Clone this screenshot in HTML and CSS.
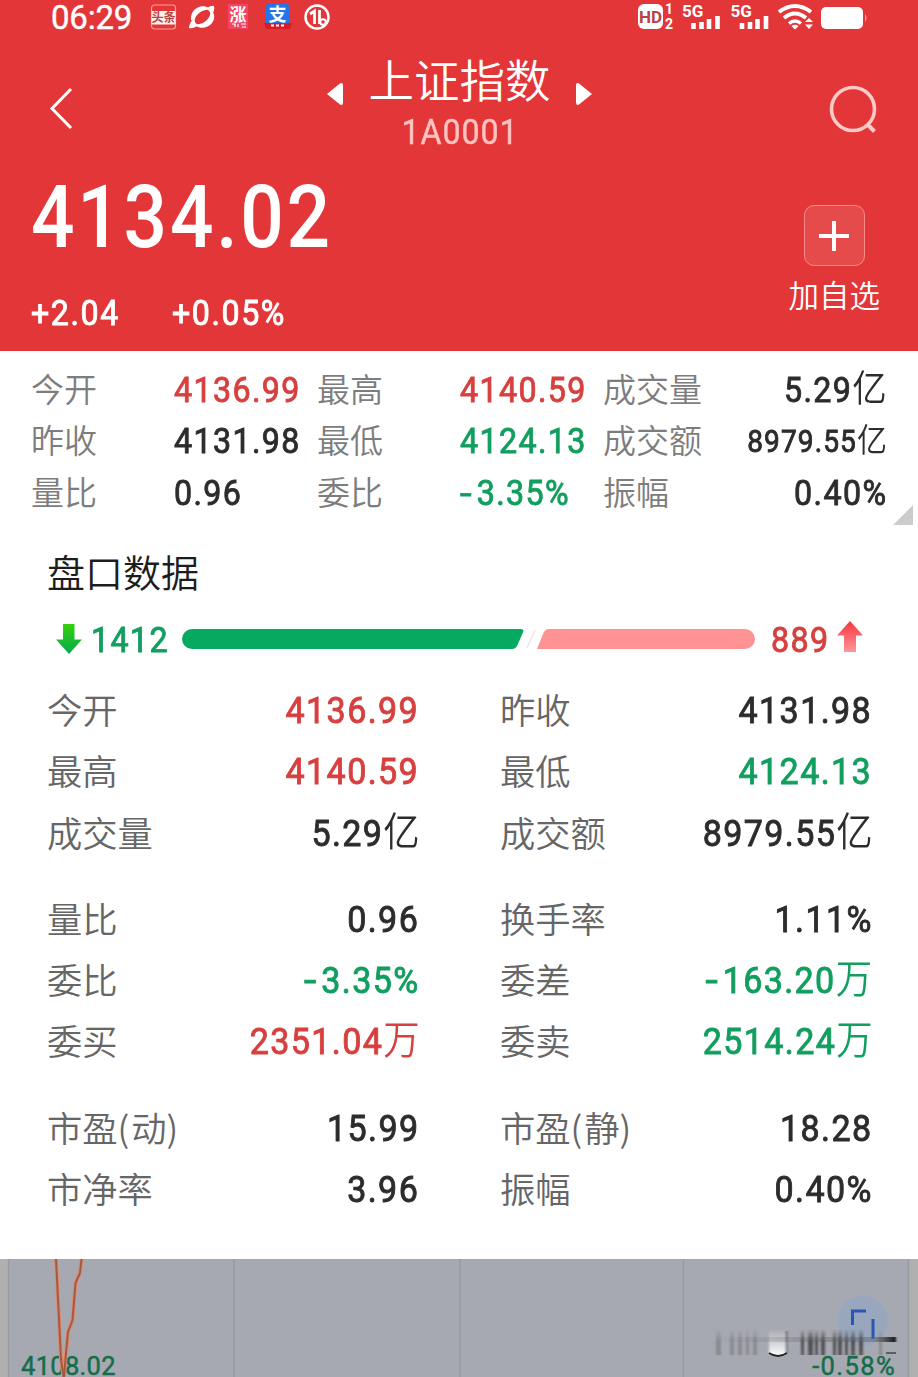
FILE: index.html
```html
<!DOCTYPE html>
<html lang="zh-CN">
<head>
<meta charset="utf-8">
<title>上证指数</title>
<link rel="stylesheet" href="styles.css">
</head>
<body>
<header class="header">
  <div class="status">
    <span class="clock">06:29</span>
    <svg class="status-apps" width="182" height="34" viewBox="0 0 182 34">
      <rect x="1.500" y="5" width="24" height="24" rx="3" fill="none" stroke="#ff9a95" stroke-width="1.200"/>
      <rect x="1.500" y="11" width="24" height="13.500" fill="#fff3f0"/>
      <text x="13.500" y="22" class="app-news" text-anchor="middle">头条</text>
      <ellipse cx="52.500" cy="17" rx="10.500" ry="6.500" transform="rotate(-40 52.500 17)" fill="none" stroke="#fff" stroke-width="2.400"/>
      <path d="M41 20C40 9 51 3 59 8C51 8 44 13 43 21zM64 14C66 25 54 31 46 26C54 26 61 20 63 13zM57 8q5-3 7-2 1 4-2 9zM43 19q-4 5-4 9 4 1 8-2z" fill="#fff"/>
      <rect x="78" y="4" width="20" height="25" fill="#f54463"/>
      <text x="88" y="21" class="app-rise" text-anchor="middle">涨</text>
      <path d="M82 24h3v3m3-3v3m3-3h5m-4 3h4" stroke="#fff" stroke-width="1.200" fill="none"/>
      <rect x="115" y="4" width="25" height="24" rx="4" fill="#2675e8"/>
      <text x="127.500" y="21" class="app-pay" text-anchor="middle">支</text>
      <path d="M114 23h28l-2 6h-24z" fill="#d61e28"/>
      <path d="M121 25.500h3m2 0h3m2 0h3" stroke="#fff" stroke-width="2"/>
      <circle cx="167" cy="17" r="11.500" fill="none" stroke="#fff" stroke-width="2.500"/>
      <path d="M160 14l4.500-3v13M169.500 10v14" fill="none" stroke="#fff" stroke-width="2.800"/>
      <circle cx="173" cy="22" r="2.800" fill="none" stroke="#fff" stroke-width="2"/>
    </svg>
    <svg class="status-system" width="232" height="34" viewBox="0 0 232 34">
      <rect x="1" y="4" width="25" height="25" rx="6" fill="#fff"/>
      <text x="13.500" y="23" class="hd" text-anchor="middle">HD</text>
      <text x="32" y="14" class="sim" text-anchor="middle">1</text>
      <text x="32" y="29" class="sim" text-anchor="middle">2</text>
      <g id="signal">
        <text x="45" y="16.500" class="net">5G</text>
        <path d="M56.500 29v-6M64.500 29v-7M72 29v-10M80.500 29v-13" stroke="#fff" stroke-width="4.600"/>
      </g>
      <use href="#signal" x="48.500"/>
      <g fill="none" stroke="#fff">
        <path d="M142 12Q158 0 174 12" stroke-width="4"/>
        <path d="M147 18Q158 9 169 18" stroke-width="4"/>
        <path d="M152 23.500Q158 18.500 164 23.500" stroke-width="3.500"/>
      </g>
      <path d="M154.500 26Q158 23.500 161.500 26L158 29.500zM168 22l4-4 4 4zM168 24.500h8l-4 4.500z" fill="#fff"/>
      <rect x="184" y="7" width="42" height="22" rx="5" fill="#fff"/>
      <path d="M228 14q3 4 0 8z" fill="#f4a3a3"/>
    </svg>
  </div>
  <nav class="nav">
    <svg class="back" width="30" height="46" viewBox="0 0 30 46"><path d="M25 4L6 23.500 25 43" fill="none" stroke="#fff" stroke-width="3"/></svg>
    <div class="titles">
      <div class="title-line">
        <svg width="18" height="24" viewBox="0 0 18 24"><path d="M1 12L14 1.500q3-1.500 3 2v17q0 3.500-3 2z" fill="#fff"/></svg>
        <h1>上证指数</h1>
        <svg width="18" height="24" viewBox="0 0 18 24"><path d="M17 12L4 1.500Q1 0 1 3.500v17Q1 24 4 22.500z" fill="#fff"/></svg>
      </div>
      <div class="code">1A0001</div>
    </div>
    <svg class="search" width="50" height="50" viewBox="0 0 50 50"><circle cx="25" cy="25" r="21.500" fill="none" stroke="#ffc9c8" stroke-width="3.600"/><path d="M39 40l7.500 7.500" stroke="#ffc9c8" stroke-width="4"/></svg>
  </nav>
  <div class="quote">
    <div>
      <div class="price">4134.02</div>
      <div class="change"><span>+2.04</span><span>+0.05%</span></div>
    </div>
    <div class="watch">
      <div class="plus"><svg width="32" height="32" viewBox="0 0 32 32"><path d="M16 1v30M1 16h30" stroke="#fff" stroke-width="4"/></svg></div>
      <span>加自选</span>
    </div>
  </div>
</header>
<section class="summary">
  <span class="label">今开</span><span class="num red">4136.99</span><span class="label">最高</span><span class="num red">4140.59</span><span class="label">成交量</span><span class="num end">5.29<i>亿</i></span>
  <span class="label">昨收</span><span class="num">4131.98</span><span class="label">最低</span><span class="num green">4124.13</span><span class="label">成交额</span><span class="num end compact">8979.55<i>亿</i></span>
  <span class="label">量比</span><span class="num">0.96</span><span class="label">委比</span><span class="num green"><span class="minus">-</span>3.35%</span><span class="label">振幅</span><span class="num end">0.40%</span>
  <svg class="corner" width="20" height="20" viewBox="0 0 20 20"><path d="M20 0v20H0z" fill="#ccc"/></svg>
</section>
<main class="sheet">
  <h2>盘口数据</h2>
  <div class="balance">
    <svg width="26" height="32" viewBox="0 0 26 32"><defs><linearGradient id="down" x2="0" y2="1"><stop stop-color="#35d20b"/><stop offset="1" stop-color="#04a950"/></linearGradient></defs><path d="M7 1h11.500v15.500H26L13 31 0 16.500h7z" fill="url(#down)"/></svg>
    <span class="fall"><span class="num green">1412</span></span>
    <svg class="ratio" width="574" height="20" viewBox="0 0 574 20">
      <path d="M10 0H338.500q4 0 2.500 3.500L335 17q-1.500 3-5 3H10A10 10 0 0 1 10 0z" fill="#05aa60"/>
      <path d="M353 1l-8 18" stroke="#ddd" stroke-width="1"/>
      <path d="M367 0H563a10 10 0 0 1 0 20H355L361 5q2-5 6-5z" fill="#ff9293"/>
    </svg>
    <span class="rise"><span class="num red">889</span></span>
    <svg class="up" width="26" height="31" viewBox="0 0 26 31"><defs><linearGradient id="up" x2="0" y2="1"><stop stop-color="#f5363e"/><stop offset="1" stop-color="#ff969b"/></linearGradient></defs><path d="M13 0L26 14.500h-7V31H7V14.500H0z" fill="url(#up)"/></svg>
  </div>
  <div class="group">
    <div class="item"><span class="label">今开</span><span class="num red">4136.99</span></div>
    <div class="item"><span class="label">昨收</span><span class="num">4131.98</span></div>
    <div class="item"><span class="label">最高</span><span class="num red">4140.59</span></div>
    <div class="item"><span class="label">最低</span><span class="num green">4124.13</span></div>
    <div class="item"><span class="label">成交量</span><span class="num">5.29<i>亿</i></span></div>
    <div class="item"><span class="label">成交额</span><span class="num">8979.55<i>亿</i></span></div>
  </div>
  <div class="group">
    <div class="item"><span class="label">量比</span><span class="num">0.96</span></div>
    <div class="item"><span class="label">换手率</span><span class="num">1.11%</span></div>
    <div class="item"><span class="label">委比</span><span class="num green"><span class="minus">-</span>3.35%</span></div>
    <div class="item"><span class="label">委差</span><span class="num green"><span class="minus">-</span>163.20<i>万</i></span></div>
    <div class="item"><span class="label">委买</span><span class="num red">2351.04<i>万</i></span></div>
    <div class="item"><span class="label">委卖</span><span class="num green">2514.24<i>万</i></span></div>
  </div>
  <div class="group">
    <div class="item"><span class="label">市盈<b>(</b>动<b>)</b></span><span class="num">15.99</span></div>
    <div class="item"><span class="label">市盈<b>(</b>静<b>)</b></span><span class="num">18.28</span></div>
    <div class="item"><span class="label">市净率</span><span class="num">3.96</span></div>
    <div class="item"><span class="label">振幅</span><span class="num">0.40%</span></div>
  </div>
</main>
<svg class="chart" width="918" height="118" viewBox="0 0 918 118">
  <defs>
    <linearGradient id="fadeDark" x2="0" y2="1"><stop stop-color="#222" stop-opacity="0"/><stop offset=".45" stop-color="#222" stop-opacity=".7"/><stop offset="1" stop-color="#222" stop-opacity=".6"/></linearGradient>
    <linearGradient id="fadeGray" x2="0" y2="1"><stop stop-color="#777" stop-opacity="0"/><stop offset=".5" stop-color="#777" stop-opacity=".6"/><stop offset="1" stop-color="#777" stop-opacity=".6"/></linearGradient>
    <linearGradient id="fadeWhite" x2="0" y2="1"><stop stop-color="#fff" stop-opacity="0"/><stop offset="1" stop-color="#fff"/></linearGradient>
    <linearGradient id="streak"><stop stop-color="#666" stop-opacity="0"/><stop offset=".6" stop-color="#666" stop-opacity=".4"/><stop offset=".88" stop-color="#666" stop-opacity=".5"/><stop offset="1" stop-color="#111"/></linearGradient>
    <filter id="soft" x="-5%" y="-20%" width="110%" height="140%"><feGaussianBlur stdDeviation=".9 .3"/></filter>
  </defs>
  <rect width="918" height="118" fill="#b0b0b0"/>
  <rect x="8" width="900" height="118" fill="#a7a9b2"/>
  <path d="M8.500 0v118M234 0v118M460 0v118M683.500 0v118M908.500 0v118" stroke="#989aa4" stroke-width="1.500"/>
  <text x="21" y="115.500" class="axis">4108.02</text>
  <path d="M56 0L58.500 50 61 100 63.500 118M81.500 0L80 14 75.500 24 72.500 61 68 73 66 94 64 118" fill="none" stroke="#e88768" stroke-width="3.800"/>
  <path d="M56 0L58.500 50 61 100 63.500 118M81.500 0L80 14 75.500 24 72.500 61 68 73 66 94 64 118" fill="none" stroke="#9e5c47" stroke-width="2"/>
  <circle cx="862.500" cy="62" r="25" fill="#98a7be"/>
  <path d="M852.500 66V52h13.500M873 60v20" fill="none" stroke="#2a55b5" stroke-width="3"/>
  <g filter="url(#soft)">
    <path d="M716 70h5v26h-5zM730 70h4v26h-4zM738 70h4v26h-4zM746 70h3v26h-3zM753 70h4v26h-4zM879 70h3v26h-3z" fill="url(#fadeGray)"/>
    <path d="M801 70h3v26h-3zM808 70h5v26h-5zM815 70h3v26h-3zM821 70h4v26h-4zM833 70h3v26h-3zM838 70h4v26h-4zM845 70h3v26h-3zM851 70h4v26h-4zM859 70h4v26h-4z" fill="url(#fadeDark)"/>
    <path d="M769 70h18v24q-9 7-18 0z" fill="url(#fadeWhite)"/>
    <path d="M786.500 72v22" stroke="#555" stroke-width="1.500"/>
    <rect x="714" y="78" width="182" height="5" fill="url(#streak)"/>
  </g>
  <path d="M769 94q9 6 18 0" fill="none" stroke="#222" stroke-width="1.800"/>
  <path d="M886 94h10" stroke="#444" stroke-width="1.500"/>
  <text x="896" y="115.500" class="axis wide" text-anchor="end">-0.58%</text>
</svg>
</body>
</html>
```
FILE: styles.css
```css
* { box-sizing: border-box; }
body {
  margin: 0;
  width: 918px;
  height: 1377px;
  overflow: hidden;
  background: #fff;
  color: #2c2c2c;
  font-family: Roboto, "Noto Sans CJK SC", sans-serif;
}
svg { display: block; flex: none; }
h1, h2 { margin: 0; font-weight: 350; }

.header { height: 351px; background: #e33638; color: #fff; }
.status { display: flex; height: 36px; padding-left: 51px; }
.clock { width: 99px; font-size: 33px; line-height: 35px; letter-spacing: -0.2px; -webkit-text-stroke: 0.4px; }
.status-system { margin-left: 305px; }
.app-news { font: 700 12px "Noto Sans CJK SC", sans-serif; fill: #b5433f; }
.app-rise { font: 700 17px "Noto Sans CJK SC", sans-serif; fill: #fff; }
.app-pay { font: 700 18px "Noto Sans CJK SC", sans-serif; fill: #fff; }
.hd { font: 700 17px Roboto, sans-serif; fill: #b64545; }
.sim { font: 700 14px Roboto, sans-serif; fill: #fff; }
.net { font: 700 17px Roboto, sans-serif; fill: #fff; }

.nav { display: flex; height: 124px; padding: 0 40px 0 46px; justify-content: space-between; }
.back { margin-top: 49px; }
.search { margin-top: 48px; }
.titles { width: 268px; margin-left: 15px; text-align: center; }
.title-line { display: flex; height: 76px; padding-top: 18px; align-items: center; justify-content: space-between; }
.title-line svg { margin-top: 22px; }
.title-line h1 { font-size: 45.5px; line-height: 66px; white-space: nowrap; }
.code { height: 40px; font-size: 35px; line-height: 41px; color: #ffc3c0; letter-spacing: 1px; transform: scaleX(0.92); -webkit-text-stroke: 0.4px; }

.quote { display: flex; justify-content: space-between; padding: 0 38px 0 31px; }
.price {
  width: 320px;
  height: 116px;
  padding-top: 7px;
  font-size: 88px;
  line-height: 100px;
  font-weight: 500;
  letter-spacing: 3.2px;
  transform: scaleX(0.87);
  transform-origin: left;
}
.change { display: flex; gap: 53px; font-size: 35px; line-height: 76px; -webkit-text-stroke: 0.9px; }
.change span { width: 88px; white-space: nowrap; letter-spacing: 1.7px; transform: scaleX(0.92); transform-origin: left; }
.watch { display: flex; flex-direction: column; align-items: center; padding-top: 45px; font-size: 30.5px; line-height: 62px; font-weight: 350; }
.plus { display: grid; width: 61px; height: 61px; place-items: center; border: 1.5px solid #f58c8c; border-radius: 10px; background: #e64b4b; }

.label { font-family: "Noto Sans CJK SC", sans-serif; font-weight: 350; white-space: nowrap; }
.label b { font-weight: 350; letter-spacing: 2px; }
.num {
  display: inline-block;
  font-weight: 400;
  white-space: nowrap;
  letter-spacing: 1.5px;
  transform: scaleX(0.92);
  transform-origin: left;
  -webkit-text-stroke: 0.9px;
}
.num i { font-size: 1.07em; line-height: 1; font-style: normal; font-weight: 350; letter-spacing: 0; -webkit-text-stroke: 0; }
.minus { display: inline-block; margin-right: 7px; transform: scaleX(1.3); transform-origin: left; }
.red { color: #d6403f; }
.green { color: #129e5f; }
.end { justify-self: end; transform-origin: right; }

.summary {
  position: relative;
  display: grid;
  grid-template-columns: repeat(5, 143px) minmax(0, 1fr);
  grid-auto-rows: 51.3px;
  height: 181px;
  padding: 13px 31px 0;
  font-size: 35px;
  line-height: 53px;
}
.summary .label { font-size: 33px; line-height: 49px; color: #7d7d7d; }
.summary .compact { font-size: 30.5px; letter-spacing: 1.2px; }
.corner { position: absolute; right: 5px; top: 154px; }

.sheet { height: 727px; padding: 0 46px 0 47px; font-size: 37px; line-height: 61.3px; }
.sheet h2 { height: 78px; font-size: 38px; line-height: 84px; color: #1d1d1d; }
.balance { display: flex; height: 58px; padding-left: 9px; align-items: center; font-size: 35px; }
.fall { width: 100px; padding: 3px 0 0 9px; }
.ratio { margin-top: -1px; }
.rise { width: 81px; padding: 3px 0 0 15px; }
.up { margin-top: -5px; }
.group { display: grid; grid-template-columns: 371px 371px; grid-auto-rows: 61.3px; column-gap: 82px; margin-bottom: 25px; }
.balance + .group { padding-top: 12px; }
.item { display: flex; justify-content: space-between; }
.item .label { font-size: 35.3px; line-height: 58px; color: #666; }
.item .num { margin-right: -1.5px; transform-origin: right; }
.chart { height: 118px; }
.axis { font: 400 25.500px Roboto, sans-serif; fill: #166d4a; stroke: #166d4a; stroke-width: 0.5px; letter-spacing: 0.3px; }
.axis.wide { letter-spacing: 1.4px; }
```
